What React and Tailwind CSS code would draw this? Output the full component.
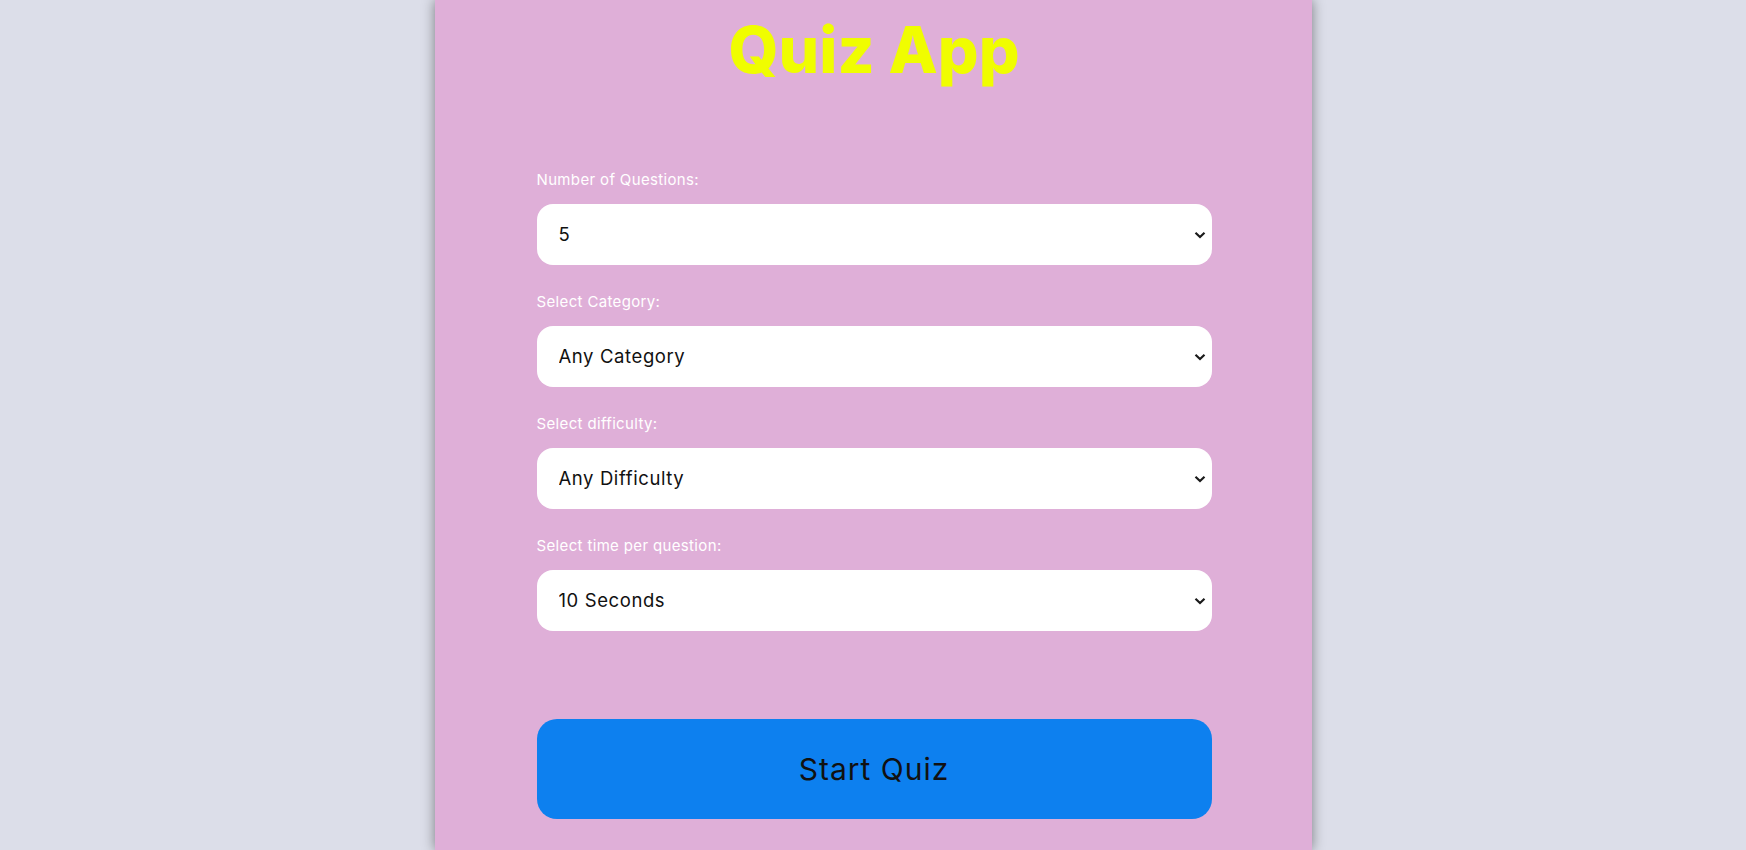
import { useState } from "react";

const FIELDS = [
    { id: "amount", label: "Number of Questions:", options: ["5", "10", "15", "20"] },
    { id: "category", label: "Select Category:", options: ["Any Category", "General Knowledge", "Science", "History"] },
    { id: "difficulty", label: "Select difficulty:", options: ["Any Difficulty", "Easy", "Medium", "Hard"] },
    { id: "time", label: "Select time per question:", options: ["10 Seconds", "20 Seconds", "30 Seconds"] },
];

function Chevron() {
    return (
        <svg width="12" height="8" viewBox="0 0 12 8" className="pointer-events-none absolute right-[6px] top-1/2 -translate-y-1/2">
            <path d="M1.5 1.8 L6 6 L10.5 1.8" fill="none" stroke="#1a1a1a" strokeWidth="2.2" />
        </svg>
    );
}

function Field({ field, value, onChange }) {
    return (
        <div className="flex flex-col">
            <label htmlFor={field.id} className="text-[15px] leading-[21px] tracking-[0.35px] text-white mb-[14px]">
                {field.label}
            </label>
            <div className="relative">
                <select
                    id={field.id}
                    value={value}
                    onChange={(e) => onChange(e.target.value)}
                    className="appearance-none w-full h-[61px] bg-white rounded-[16px] pl-[22px] pr-10 text-[18.5px] tracking-[0.6px] text-[#111] outline-none"
                >
                    {field.options.map((o) => (
                        <option key={o}>{o}</option>
                    ))}
                </select>
                <Chevron />
            </div>
        </div>
    );
}

export default function App() {
    const [values, setValues] = useState({
        amount: "5",
        category: "Any Category",
        difficulty: "Any Difficulty",
        time: "10 Seconds",
    });

    return (
        <div className="min-h-screen bg-[#dcdee9] flex justify-center" style={{ fontFamily: "Inter, 'Noto Sans', sans-serif" }}>
            <div className="w-[877px] min-h-[850px] bg-[#dfafd8] shadow-[0_0_12px_rgba(0,0,0,0.45)] pl-[102px] pr-[100px] pt-[12px]">
                <h1 className="text-center text-[64px] leading-[76px] font-extrabold text-[#f0fd00]">
                    Quiz App
                </h1>
                <div className="mt-[81px] flex flex-col gap-[26px]">
                    {FIELDS.map((f) => (
                        <Field
                            key={f.id}
                            field={f}
                            value={values[f.id]}
                            onChange={(v) => setValues({ ...values, [f.id]: v })}
                        />
                    ))}
                </div>
                <button className="mt-[88px] w-full h-[100px] rounded-[20px] bg-[#0d80ef] text-[30px] tracking-[1px] text-[#111]">
                    Start Quiz
                </button>
            </div>
        </div>
    );
}
